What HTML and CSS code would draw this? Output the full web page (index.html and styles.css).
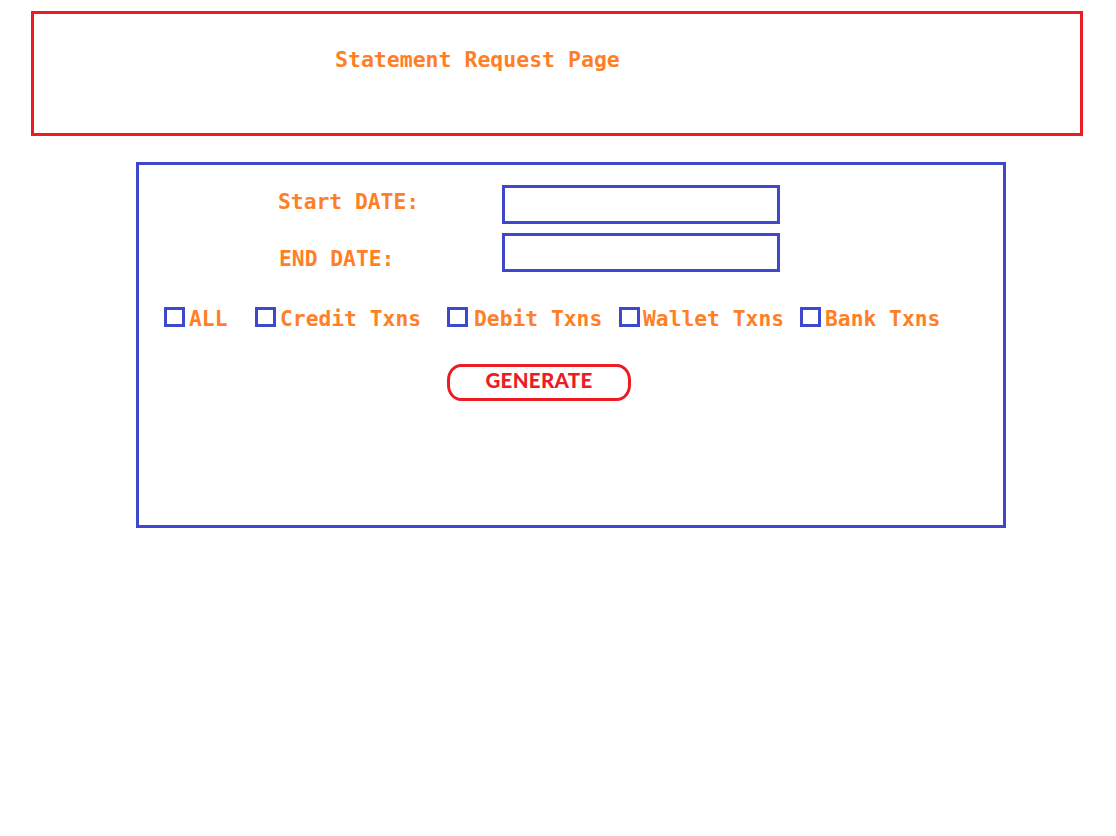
FILE: index.html
```html
<!DOCTYPE html>
<html lang="en">
<head>
<meta charset="utf-8">
<title>Statement Request Page</title>
<link rel="stylesheet" href="styles.css">
</head>
<body>
  <header class="page-header">
    <h1 class="page-title">Statement Request Page</h1>
  </header>

  <main class="panel">
    <div class="date-form">
      <label class="field-label field-label--start" for="start">Start DATE:</label>
      <input class="date-input" id="start" type="text">
      <label class="field-label field-label--end" for="end">END DATE:</label>
      <input class="date-input" id="end" type="text">
    </div>

    <div class="filters">
      <label class="filter"><span class="check"></span><span class="filter-text">ALL</span></label>
      <label class="filter"><span class="check"></span><span class="filter-text">Credit Txns</span></label>
      <label class="filter filter--wide"><span class="check"></span><span class="filter-text">Debit Txns</span></label>
      <label class="filter filter--tight"><span class="check"></span><span class="filter-text">Wallet Txns</span></label>
      <label class="filter"><span class="check"></span><span class="filter-text">Bank Txns</span></label>
    </div>

    <button class="generate" type="button">GENERATE</button>
  </main>
</body>
</html>
```

FILE: styles.css
```css
* {
  box-sizing: border-box;
}

html, body {
  margin: 0;
  padding: 0;
  background: #ffffff;
}

body {
  font-family: "DejaVu Sans Mono", "Liberation Mono", monospace;
  font-weight: 700;
  font-size: 21.3px;
  color: #ff7f27;
  width: 1116px;
  height: 836px;
}

.page-header {
  margin: 11px 0 0 31px;
  width: 1052px;
  height: 125px;
  border: 3px solid #ed1c24;
  padding: 33px 0 0 301px;
}

.page-title {
  margin: 0;
  font-size: 21.5px;
  font-weight: 700;
  line-height: normal;
}

.panel {
  margin: 26px 0 0 136px;
  width: 870px;
  height: 366px;
  border: 3px solid #3f48cc;
  padding: 20px 0 0 139px;
}

.date-form {
  display: grid;
  grid-template-columns: 224px 278px;
  row-gap: 9px;
  align-items: center;
}

.field-label {
  line-height: normal;
}

.field-label--start {
  margin-bottom: 6px;
}

.field-label--end {
  padding-left: 1px;
  margin-top: 11px;
}

.date-input {
  width: 278px;
  height: 39px;
  border: 3px solid #3f48cc;
  border-radius: 0;
  background: #ffffff;
  margin: 0;
  padding: 0;
  outline: none;
}

.filters {
  margin: 34px 0 0 -114px;
  display: grid;
  grid-template-columns: 91px 192px 172px 181px auto;
}

.filter {
  display: flex;
  align-items: baseline;
  gap: 4px;
  line-height: normal;
}

.filter--wide {
  gap: 6px;
}

.filter--tight {
  gap: 3px;
}

.check {
  display: block;
  width: 21px;
  height: 20px;
  border: 3px solid #3f48cc;
  position: relative;
  top: 1px;
}

.filter-text {
  white-space: pre;
}

.generate {
  display: flex;
  align-items: center;
  justify-content: center;
  margin: 33px 0 0 169px;
  width: 184px;
  height: 37px;
  padding: 0 0 5px 0;
  border: 3px solid #ed1c24;
  border-radius: 14px / 16px;
  background: #ffffff;
  color: #ed1c24;
  font-family: "Lato", "Open Sans", sans-serif;
  font-weight: 900;
  font-size: 20.5px;
  letter-spacing: 0.3px;
  line-height: normal;
}
```
